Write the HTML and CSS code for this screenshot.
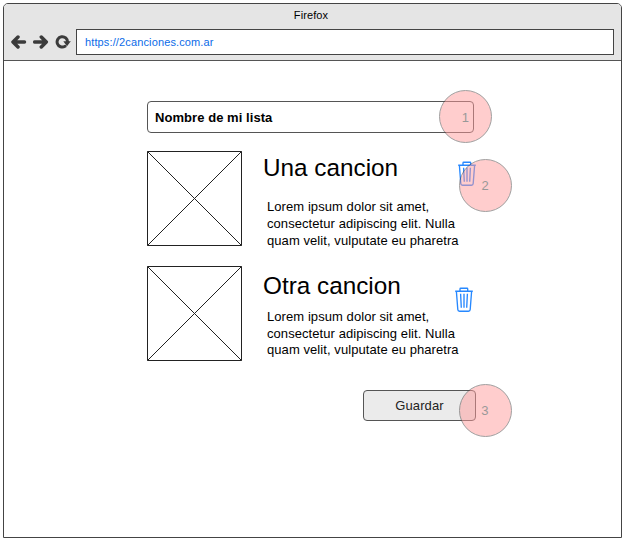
FILE: index.html
```html
<!DOCTYPE html>
<html lang="es">
<head>
<meta charset="utf-8">
<title>Firefox</title>
<link rel="stylesheet" href="styles.css">
</head>
<body>
<svg class="defs" aria-hidden="true">
  <symbol id="trash" viewBox="0 0 20 26">
    <path d="M1.200 4.200h17.600M6 4V1.900Q6 1.200 6.700 1.200h6.300q.7 0 .7.700V4M2.400 4.500l1.400 18q.1 1.700 1.700 1.700h9q1.600 0 1.700-1.700l1.400-18M6.600 6.800l.7 14M10 6.800v14M13.400 6.800l-.7 14"/>
  </symbol>
  <symbol id="placeholder" viewBox="0 0 95 95">
    <path d="M.5.5h94v94H.5zM.5.5l94 94M94.500.5l-94 94"/>
  </symbol>
</svg>
<div class="window">
  <header class="chrome">
    <div class="title">Firefox</div>
    <nav class="toolbar">
      <svg class="nav-icon" viewBox="0 0 16 16"><path d="M13.500 8H2.500M7 3 2 8l5 5"/></svg>
      <svg class="nav-icon" viewBox="0 0 16 16"><path d="M1.700 8H13M8.300 3l5 5-5 5"/></svg>
      <svg class="nav-icon reload" viewBox="0 0 16 16"><path d="M10 12.300A5.200 5.200 0 1 1 12.500 8"/><path class="tip" d="M8.300 7.300h7.500L12 12.300z"/></svg>
      <div class="address">https://2canciones.com.ar</div>
    </nav>
  </header>
  <main class="content">
    <div class="field">Nombre de mi lista<span class="badge badge-name">1</span></div>
    <article class="song">
      <svg class="cover"><use href="#placeholder"/></svg>
      <div class="text">
        <h2>Una cancion</h2>
        <p>Lorem ipsum dolor sit amet,<br>consectetur adipiscing elit. Nulla<br>quam velit, vulputate eu pharetra</p>
      </div>
      <div class="action"><svg class="trash"><use href="#trash"/></svg><span class="badge badge-delete">2</span></div>
    </article>
    <article class="song second">
      <svg class="cover"><use href="#placeholder"/></svg>
      <div class="text">
        <h2>Otra cancion</h2>
        <p>Lorem ipsum dolor sit amet,<br>consectetur adipiscing elit. Nulla<br>quam velit, vulputate eu pharetra</p>
      </div>
      <div class="action"><svg class="trash"><use href="#trash"/></svg></div>
    </article>
    <div class="save">Guardar<span class="badge badge-save">3</span></div>
  </main>
</div>
</body>
</html>
```
FILE: styles.css
```css
* { box-sizing: border-box; }
body {
  margin: 0;
  padding: 3px;
  background: #fff;
  color: #000;
  font-family: "Liberation Sans", Arial, sans-serif;
  font-size: 13px;
  overflow: hidden;
}
.defs { position: absolute; width: 0; height: 0; }
.window {
  width: 619px;
  height: 535px;
  border: 1px solid #444;
  border-radius: 5px 5px 0 0;
}
.chrome {
  height: 57px;
  background: #e5e5e5;
  border-bottom: 1px solid #555;
  border-radius: 4px 4px 0 0;
}
.title {
  height: 25px;
  padding-right: 3px;
  font-size: 11px;
  line-height: 23px;
  letter-spacing: 0.1px;
  text-align: center;
}
.toolbar { display: flex; align-items: center; padding: 0 7px 0 7px; }
.nav-icon {
  width: 16px;
  height: 16px;
  margin-right: 6px;
  fill: none;
  stroke: #3b3b3b;
  stroke-width: 3.5;
  stroke-linecap: round;
  stroke-linejoin: round;
}
.nav-icon.reload { margin-right: 5px; stroke-width: 3; }
.nav-icon .tip { fill: #3b3b3b; stroke: none; }
.address {
  flex: 1;
  height: 26px;
  padding-left: 8px;
  background: #fff;
  border: 1px solid #444;
  color: #0b6be8;
  font-size: 11px;
  line-height: 24px;
  letter-spacing: 0.13px;
}
.content { width: 328px; margin: 40px 0 0 143px; }
.field {
  position: relative;
  width: 327px;
  height: 32px;
  padding-left: 7px;
  border: 1px solid #555;
  border-radius: 4px;
  font-weight: bold;
  line-height: 31px;
  letter-spacing: 0.06px;
}
.song { display: flex; height: 95px; margin-top: 18px; }
.second { margin-top: 20px; }
.cover {
  width: 95px;
  height: 95px;
  flex: none;
  fill: none;
  stroke: #222;
  stroke-width: 1;
}
.text { width: 211px; flex: none; padding-left: 21px; white-space: nowrap; }
h2 { margin: 1px 0 0; font-size: 24.3px; line-height: 32px; font-weight: normal; }
p { margin: 14px 0 0 4px; line-height: 17px; letter-spacing: 0.07px; }
.second h2 { margin-top: 4px; }
.second p { margin-top: 7px; line-height: 16.5px; }
.action { position: relative; width: 20px; height: 26px; margin: 10px 0 0 4px; }
.second .action { margin: 21px 0 0 1px; }
.trash {
  display: block;
  width: 20px;
  height: 26px;
  fill: none;
  stroke: #2688ff;
  stroke-width: 1.35;
}
.save {
  position: relative;
  width: 113px;
  height: 31px;
  margin: 29px 0 0 216px;
  background: #ebebeb;
  border: 1px solid #555;
  border-radius: 4px;
  color: #222;
  line-height: 29px;
  letter-spacing: 0.1px;
  text-align: center;
}
.badge {
  position: absolute;
  width: 53px;
  height: 53px;
  border: 1px solid #444;
  border-radius: 50%;
  background: #ff9c9c;
  color: #333;
  font-size: 13px;
  font-weight: normal;
  line-height: 51px;
  text-align: center;
  opacity: .5;
}
.badge-name { left: 291px; top: -12px; line-height: 53px; }
.badge-delete { left: 1.500px; top: -2px; }
.badge-save { left: 94.500px; top: -7px; }
```
